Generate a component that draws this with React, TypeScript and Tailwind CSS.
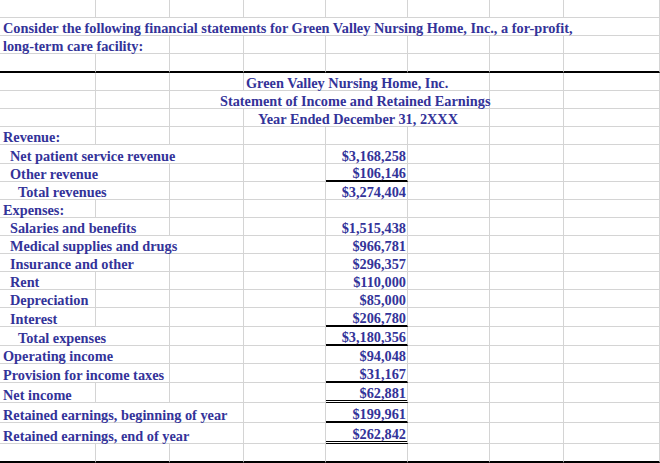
import React from 'react';
import clsx from 'clsx';

type Rule = 'black' | 'double';
type Cell = { span?: number; text?: string; value?: boolean; pad?: string; rule?: Rule };
type Row = { h: string; cells: Cell[]; thick?: boolean };

const spanClass: Record<number, string> = {
  1: 'col-span-1',
  2: 'col-span-2',
  3: 'col-span-3',
  4: 'col-span-4',
  8: 'col-span-8',
};

const empties = (n: number): Cell[] => Array.from({ length: n }, () => ({}));

// label in column A (spilling over to B/C), amount in column E
function item(text: string, span: number, pad: string, value?: string, rule?: Rule, h = 'h-[18px]'): Row {
  const cells: Cell[] = [{ span, text, pad }];
  if (value) cells.push(...empties(4 - span), { text: value, value: true, rule }, ...empties(3));
  else cells.push(...empties(8 - span));
  return { h, cells };
}

const rows: Row[] = [
  { h: 'h-[18px]', cells: empties(8) },
  {
    h: 'h-[18px]',
    cells: [
      {
        span: 8,
        pad: 'pl-[3px]',
        text: 'Consider the following financial statements for Green Valley Nursing Home, Inc., a for-profit,',
      },
    ],
  },
  { h: 'h-[18px]', cells: [{ span: 2, pad: 'pl-[3px]', text: 'long-term care facility:' }, ...empties(6)] },
  { h: 'h-[19px]', cells: empties(8), thick: true },
  {
    h: 'h-[18px]',
    cells: [...empties(3), { span: 3, pad: 'pl-[2px]', text: 'Green Valley Nursing Home, Inc.' }, ...empties(2)],
  },
  {
    h: 'h-[18px]',
    cells: [...empties(2), { span: 4, pad: 'pl-[50px]', text: 'Statement of Income and Retained Earnings' }, ...empties(2)],
  },
  {
    h: 'h-[18px]',
    cells: [...empties(3), { span: 3, pad: 'pl-[14px]', text: 'Year Ended December 31, 2XXX' }, ...empties(2)],
  },
  item('Revenue:', 1, 'pl-[3px]'),
  item('Net patient service revenue', 3, 'pl-[10px]', '$3,168,258', undefined, 'h-[19px]'),
  item('Other revenue', 2, 'pl-[10px]', '$106,146', 'black'),
  item('Total revenues', 2, 'pl-[18px]', '$3,274,404'),
  item('Expenses:', 1, 'pl-[3px]'),
  item('Salaries and benefits', 2, 'pl-[10px]', '$1,515,438'),
  item('Medical supplies and drugs', 3, 'pl-[10px]', '$966,781'),
  item('Insurance and other', 2, 'pl-[10px]', '$296,357'),
  item('Rent', 1, 'pl-[10px]', '$110,000'),
  item('Depreciation', 1, 'pl-[10px]', '$85,000'),
  item('Interest', 1, 'pl-[10px]', '$206,780', 'black', 'h-[19px]'),
  item('Total expenses', 2, 'pl-[18px]', '$3,180,356', 'black', 'h-[19px]'),
  item('Operating income', 2, 'pl-[3px]', '$94,048'),
  item('Provision for income taxes', 2, 'pl-[3px]', '$31,167', 'black', 'h-[19px]'),
  item('Net income', 1, 'pl-[3px]', '$62,881', 'double', 'h-[20px]'),
  item('Retained earnings, beginning of year', 3, 'pl-[3px]', '$199,961', 'black', 'h-[20px]'),
  item('Retained earnings, end of year', 3, 'pl-[3px]', '$262,842', 'double', 'h-[21px]'),
  { h: 'h-[19px]', cells: empties(8), thick: true },
];

function App() {
  return (
    <div className="w-[660px] h-[463px] overflow-hidden bg-white font-['Liberation_Serif','Times_New_Roman',serif] text-[14.3px] leading-none font-bold text-[#333399]">
      {rows.map((row, i) => (
        <div key={i} className={clsx('grid grid-cols-[96px_74px_74px_82px_82px_82px_74px_96px]', row.h)}>
          {row.cells.map((c, j) => (
            <div
              key={j}
              className={clsx(
                'flex items-end whitespace-nowrap border-r border-r-[#d4d4d4]',
                spanClass[c.span ?? 1],
                row.thick
                  ? 'border-b-2 border-b-black'
                  : c.rule === 'black'
                    ? 'border-b-2 border-b-black'
                    : c.rule === 'double'
                      ? 'border-b-[3px] border-double border-b-black'
                      : 'border-b border-b-[#d4d4d4]',
                c.value ? 'justify-end pr-[1px]' : c.pad,
              )}
            >
              {c.text}
            </div>
          ))}
        </div>
      ))}
    </div>
  );
}

export default App;
